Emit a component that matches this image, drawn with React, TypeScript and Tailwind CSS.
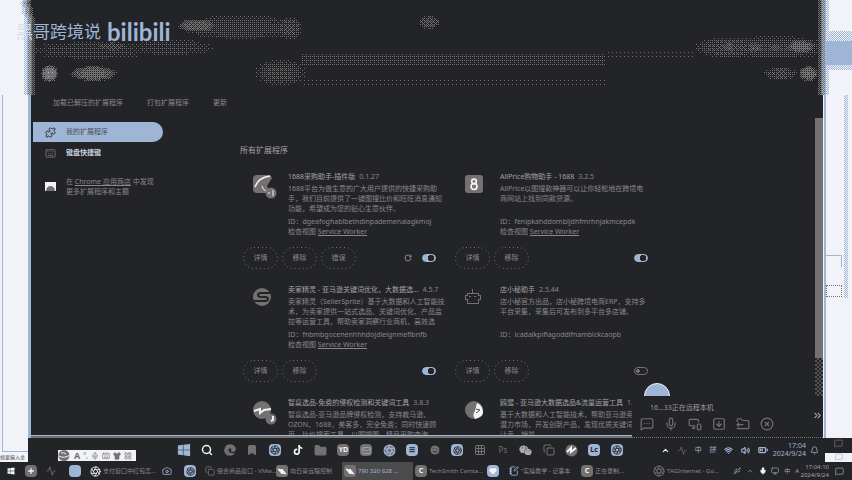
import { useMemo, useState } from "react";
import type { ReactNode } from "react";
import {
  Search, Mail, Folder, Camera, RotateCw, Mic, MessageSquare, MessageSquareMore, FolderOutput, CircleX, Wifi, Volume2,
  BatteryMedium, ChevronUp, ChevronsRight, Keyboard, Puzzle, MonitorSmartphone, Shirt, LayoutGrid, Bookmark,
  SquareArrowDown, Usb, Monitor, Heart, NotebookPen, Activity, Plus, Aperture, Copy, Grid3x3, Smile, Bell,
} from "lucide-react";
import { FaWindows, FaTiktok, FaWeixin, FaEdge } from "react-icons/fa";

/* ---------- dithered haze along the top of the screen ---------- */

const BAYER = [0, 8, 2, 10, 12, 4, 14, 6, 3, 11, 1, 9, 15, 7, 13, 5];
const LEVELS = ["#232427", "#767171", "#9eb5d6", "#f1f3f8"];
// centre x, centre y, radius x, radius y, strength
const BLOBS = [
  [197, 25, 20, 7, 0.65], [240, 27, 62, 13, 0.26], [90, 50, 62, 10, 0.2], [112, 46, 16, 5, 0.4],
  [170, 47, 46, 9, 0.2], [49, 73, 9, 9, 1.05], [93, 73, 24, 8, 0.75], [289, 28, 14, 12, 0.35],
  [280, 72, 26, 14, 0.3], [429, 22, 11, 7, 0.45], [730, 47, 38, 11, 0.35], [775, 47, 60, 12, 0.3],
  [800, 46, 16, 7, 0.75], [728, 46, 8, 6, 0.55], [754, 47, 8, 6, 0.55], [775, 47, 7, 5, 0.5],
  [780, 73, 18, 7, 0.35], [808, 73, 10, 8, 0.8],
];

function hazeLevel(x: number, y: number) {
  let v = 0;
  for (const [cx, cy, rx, ry, s] of BLOBS) {
    const d = ((x - cx) / rx) ** 2 + ((y - cy) / ry) ** 2;
    if (d < 1) v = Math.max(v, s * (1 - d * d));
  }
  if (x > 300 && x < 605 && y > 53 && y < 66) v = Math.max(v, 0.16);
  if (x > 300 && x < 605 && y > 76 && y < 85) v = Math.max(v, 0.06);
  if (x > 605 && x < 695 && y > 49 && y < 58) v = Math.max(v, 0.06);
  const edge = 27 + (y > 16 ? 1 : (y - 16) / 6);
  const left = Math.max(0, Math.min(3, (edge + 7 - x) / 4));
  let right = Math.max(0, Math.min(3, (x - 817) / 4));
  if (y > 30 && y < 70) right = Math.min(right, y > 40 && y < 65 ? 2 : 2.5);
  return Math.max(v, left, right);
}

function Haze() {
  const paths = useMemo(() => {
    const out = ["", "", "", ""];
    for (let y = 0; y < 95; y++) {
      let start = 0;
      let current = -1;
      for (let x = 0; x <= 852; x++) {
        let level = -1;
        if (x < 852) {
          const v = hazeLevel(x, y);
          const base = Math.floor(v);
          const t = (BAYER[(y % 4) * 4 + (x % 4)] + 0.5) / 16;
          level = Math.min(3, base + (v - base > t ? 1 : 0));
        }
        if (level !== current) {
          if (current >= 0) out[current] += `M${start} ${y}h${x - start}v1h${start - x}z`;
          start = x;
          current = level;
        }
      }
    }
    return out;
  }, []);
  return (
    <svg className="absolute inset-x-0 top-0 h-[95px] w-full" viewBox="0 0 852 95" preserveAspectRatio="none" shapeRendering="crispEdges" aria-hidden="true">
      {paths.map((d, i) => <path key={i} d={d} fill={LEVELS[i]} />)}
    </svg>
  );
}

/* ---------- extension logos ---------- */

const logoClass = "h-6 w-6";
const logos: Record<string, ReactNode> = {
  caigou: (
    <svg className={logoClass} viewBox="0 0 24 24">
      <path d="M4 0h12q2 0 3 3l-5 8 4 7H4q-4 0-4-4V4q0-4 4-4z" fill="#767171" />
      <path d="M17 1C9 2 4 6 2 12" fill="none" stroke="#f1f3f8" strokeWidth="1.5" />
      <path d="M9 11q0 3 4 5" fill="none" stroke="#f1f3f8" strokeWidth="1" />
      <circle cx="18" cy="18" r="5.5" fill="#767171" />
      <path d="M20 15v4M15 18h2M19 20h2" stroke="#f1f3f8" fill="none" />
    </svg>
  ),
  aliprice: (
    <svg className={logoClass} viewBox="0 0 24 24">
      <rect width="18" height="18" rx="3" fill="#767171" />
      <circle cx="9" cy="6.5" r="2.3" fill="none" stroke="#f1f3f8" strokeWidth="1.7" />
      <circle cx="9" cy="11.5" r="3" fill="none" stroke="#f1f3f8" strokeWidth="1.7" />
    </svg>
  ),
  sprite: (
    <svg className={logoClass} viewBox="0 0 24 24">
      <circle cx="9" cy="9" r="9" fill="#767171" />
      <path d="M18 5H8q-3 0-3 2t3 2h4q3 0 3 2t-3 2H1" fill="none" stroke="#232427" strokeWidth="2" />
    </svg>
  ),
  dianxiaomi: (
    <svg className={logoClass} viewBox="0 0 24 24" shapeRendering="crispEdges">
      <path d="M7 1v4M2 5h11v2h2v4h-2v4H2v-4H0V7h2zM4 8h2M9 8h2" fill="none" stroke="#767171" strokeWidth="1" />
    </svg>
  ),
  zhiying: (
    <svg className={logoClass} viewBox="0 0 24 24">
      <circle cx="9" cy="9" r="9" fill="#767171" />
      <circle cx="18" cy="18" r="5.5" fill="#767171" />
      <path d="M1 10l6-2 0 4 4-3 7-1M20 15v4l-2 1" fill="none" stroke="#f1f3f8" strokeWidth="2" />
    </svg>
  ),
  oulu: (
    <svg className={logoClass} viewBox="0 0 24 24">
      <circle cx="9" cy="9" r="9" fill="#767171" />
      <path d="M12 2q5 2 6 8t-8 8q-3-4 0-8z" fill="#f1f3f8" />
      <path d="M11 8l4 1-4 3" fill="none" stroke="#4c4d55" />
    </svg>
  ),
};

/* ---------- extension cards ---------- */

type Extension = {
  logo: string;
  name: string;
  version: string;
  lines: string[];
  id: string;
  worker?: boolean;
  error?: boolean;
  on: boolean;
};

const extensions: Extension[] = [
  {
    logo: "caigou", name: "1688采购助手-插件版", version: "0.1.27",
    lines: ["1688平台为做生意的广大用户提供的快捷采购助", "手，我们目前提供了一键图搜比价和旺旺消息通知", "功能，希望成为您的贴心生意伙伴。"],
    id: "dgeafoghablbetndinpademenaiagkmoj", worker: true, error: true, on: true,
  },
  {
    logo: "aliprice", name: "AliPrice购物助手 - 1688", version: "3.2.5",
    lines: ["AliPrice以图搜款神器可以让你轻松地在跨境电", "商网站上找到同款货源。"],
    id: "fenipkahddombljdhfmrhnjakmcepdk", worker: true, on: true,
  },
  {
    logo: "sprite", name: "卖家精灵 - 亚马逊关键词优化，大数据选...", version: "4.5.7",
    lines: ["卖家精灵（SellerSprite）基于大数据和人工智能技", "术，为卖家提供一站式选品、关键词优化、产品监", "控等运营工具，帮助卖家洞察行业商机，高效选"],
    id: "fnbmbgocenenhhhdojdielgnmeflbnfb", worker: true, on: true,
  },
  {
    logo: "dianxiaomi", name: "店小秘助手", version: "2.5.44",
    lines: ["店小秘官方出品，店小秘跨境电商ERP，支持多", "平台采集，采集后可发布到多平台多店铺。"],
    id: "icadaikpiflagoddlfnamblckcaopb", on: false,
  },
  {
    logo: "zhiying", name: "智赢选品-免费的侵权检测和关键词工具", version: "3.8.3",
    lines: ["智赢选品-亚马逊品牌侵权检测，支持敦马逊、", "OZON，1688，美客多，完全免费；同时快速顾", "页，比价搜索工具，以图搜图，精品采购查询。"],
    id: "jkfnbmbgocenenhhhdojdielgnmefl", worker: true, on: true,
  },
  {
    logo: "oulu", name: "鸥鹭 - 亚马逊大数据选品&流量运营工具", version: "1.9.7",
    lines: ["基于大数据和人工智能技术，帮助亚马逊卖家", "潜力市场，开发创新产品，发现优质关键词，", "让卖、销量。"],
    id: "mbgocenenhhhdojdielgnmeflbnfbk", worker: true, on: true,
  },
];

function PillButton({ children }: { children: ReactNode }) {
  return (
    <button className="relative h-[22px] w-[35px] text-[7px]">
      <svg className="absolute inset-0 h-full w-full" viewBox="0 0 35 22" fill="none" aria-hidden="true">
        <rect x="0.5" y="0.5" width="34" height="21" rx="10.5" stroke="#767171" strokeDasharray="1 3" />
      </svg>
      {children}
    </button>
  );
}

function Toggle({ label, initial }: { label: string; initial: boolean }) {
  const [on, setOn] = useState(initial);
  return (
    <input
      type="checkbox"
      aria-label={label}
      checked={on}
      onChange={() => setOn(!on)}
      className="h-2 w-3.5 shrink-0 appearance-none rounded-full border border-[#767171] bg-[radial-gradient(circle_at_3px_3px,#767171_2px,#232427_2px)] checked:border-[#9eb5d6] checked:bg-[radial-gradient(circle_at_8px_3px,#232427_3px,#9eb5d6_3px)]"
    />
  );
}

function Card({ ext }: { ext: Extension }) {
  return (
    <article className="w-[196px]">
      <div className="flex">
        <div className="w-12 shrink-0 pt-[3px] pl-[13px]">{logos[ext.logo]}</div>
        <div className="whitespace-nowrap">
          <h3 className="flex gap-1 text-[#a3a3a8]">
            {ext.name} <span className="text-[#8b8787]">{ext.version}</span>
          </h3>
          <p className="mt-0.5 h-[30px]">
            {ext.lines.map((line) => <span key={line} className="block">{line}</span>)}
          </p>
          <p className="mt-[3px]">ID：{ext.id}</p>
          <p className="h-2.5">
            {ext.worker && <>检查视图 <a href="#worker" className="underline">Service Worker</a></>}
          </p>
        </div>
      </div>
      <div className="mt-2.5 flex items-center gap-1 pl-[3px]">
        <PillButton>详情</PillButton>
        <PillButton>移除</PillButton>
        {ext.error && <PillButton>错误</PillButton>}
        <span className="flex-1" />
        {ext.error && <button aria-label="重新加载" className="mr-1.5"><RotateCw size={8} strokeWidth={3} /></button>}
        <Toggle label={ext.name} initial={ext.on} />
      </div>
    </article>
  );
}

/* ---------- browser window ---------- */

function Sidebar() {
  return (
    <nav className="w-[209px] shrink-0 pt-3 pl-0.5">
      <a href="#mine" className="flex h-5 w-[130px] items-center gap-2.5 rounded-r-full bg-[#9eb5d6] pl-3 text-[#4c4d55]">
        <Puzzle size={11} color="#232427" /> 我的扩展程序
      </a>
      <a href="#keys" className="flex h-[22px] items-center gap-2.5 pl-3 font-bold text-[#c5cedd]">
        <Keyboard size={11} color="#767171" /> 键盘快捷键
      </a>
      <div className="mt-[13px] flex items-center gap-2.5 pl-3">
        <svg width="11" height="11" viewBox="0 0 11 11">
          <rect width="11" height="9" fill="#f1f3f8" />
          <path d="M1 9a4.500 5 0 0 1 9 0z" fill="#767171" />
        </svg>
        <p>在 <a href="#store" className="underline">Chrome 应用商店</a> 中发现<br />更多扩展程序和主题</p>
      </div>
    </nav>
  );
}

function RemotePanel() {
  return (
    <section className="absolute right-0 bottom-0 flex h-[42px] w-[191px] flex-col justify-between border-b border-dotted border-[#767171] bg-[#232427] pt-[7px] pb-1.5">
      <svg className="absolute bottom-full left-3 h-[13px] w-[26px]" viewBox="0 0 26 13">
        <path d="M0.500 13a12.500 12.500 0 0 1 25 0" fill="#9eb5d6" stroke="#f1f3f8" strokeWidth="1" />
      </svg>
      <p className="pl-[18px] text-[#9c9a9d]">16...33正在远程本机</p>
      <div className="flex items-center gap-2.5 pl-2 text-[#767171]">
        <button aria-label="聊天"><MessageSquareMore size={14} /></button>
        <button aria-label="语音"><Mic size={14} /></button>
        <button aria-label="屏幕"><MonitorSmartphone size={14} /></button>
        <button aria-label="下载"><SquareArrowDown size={14} /></button>
        <button aria-label="文件"><FolderOutput size={14} /></button>
        <button aria-label="断开"><CircleX size={14} /></button>
      </div>
      <button aria-label="收起" className="absolute top-3.5 right-0 text-[#f1f3f8]"><ChevronsRight size={11} /></button>
    </section>
  );
}

function BrowserWindow() {
  return (
    <section className="relative flex min-w-0 flex-1 flex-col overflow-hidden border-l-[3px] border-[#9eb5d6] bg-[#232427]">
      <div className="h-[95px] shrink-0" />
      <div className="flex h-[15px] shrink-0 items-center gap-6 pl-[22px]">
        <button>加载已解压的扩展程序</button>
        <button>打包扩展程序</button>
        <button>更新</button>
      </div>
      <div className="flex min-h-0 flex-1">
        <Sidebar />
        <main className="min-w-0 flex-1 overflow-hidden pt-[34px]">
          <h2 className="text-[8px] leading-3 text-[#a3a3a8]">所有扩展程序</h2>
          <div className="mt-4 flex max-w-[440px] flex-wrap gap-4">
            {extensions.map((ext) => <Card key={ext.name} ext={ext} />)}
          </div>
        </main>
        <div className="flex w-2 flex-col pt-2">
          <div className="h-60 bg-[#767171]" />
          <div className="flex-1 bg-[repeating-conic-gradient(#767171_0_25%,#232427_0_50%)] bg-[size:4px_4px] opacity-60" />
        </div>
      </div>
      <div className="h-[3px] shrink-0 border-t border-[#9eb5d6] bg-[#767171]" />
      <RemotePanel />
    </section>
  );
}

function RightDesktop() {
  return (
    <aside className="flex w-[29px] shrink-0 border-l border-[#f1f3f8] bg-[#f1f3f8] pt-[95px]">
      <div className="w-0.5 bg-[#9eb5d6]" />
      <div className="w-4 pt-40">
        <div className="h-3 border-t border-r border-[#9eb5d6]" />
        <div className="mt-[18px] h-3 border border-dotted border-[#767171]" />
      </div>
      <div className="ml-0.5 h-[203px] w-1 bg-[repeating-conic-gradient(#9eb5d6_0_25%,#f1f3f8_0_50%)] bg-[size:2px_2px]" />
    </aside>
  );
}

/* ---------- taskbars ---------- */

function Chip({ children, tone = "gray" }: { children?: ReactNode; tone?: "gray" | "blue" }) {
  const colors = tone === "blue" ? "bg-[#9eb5d6] text-[#232427]" : "bg-[#767171] text-[#f1f3f8]";
  return <span className={`flex h-3 w-3 items-center justify-center rounded-sm text-[7px] font-bold ${colors}`}>{children}</span>;
}

function SunflowerMark() {
  return (
    <svg width="12" height="12" viewBox="0 0 12 12">
      <rect width="12" height="12" rx="3" fill="#767171" />
      <path d="M2 4l4 1 0-1 4 5-4-1 0 1z" fill="#f1f3f8" stroke="#f1f3f8" />
    </svg>
  );
}

const dockApps: [string, ReactNode][] = [
  ["开始", <FaWindows size={14} color="#9eb5d6" />],
  ["搜索", <Search size={12} strokeWidth={3} color="#f1f3f8" />],
  ["Edge", <FaEdge size={12} color="#767171" />],
  ["收藏", <Bookmark size={12} color="#767171" fill="#767171" />],
  ["图片", <Chip tone="blue"><Aperture size={10} /></Chip>],
  ["抖音", <FaTiktok size={10} color="#f1f3f8" />],
  ["文件夹", <Folder size={13} color="#767171" fill="#767171" />],
  ["有道", <Chip>YD</Chip>],
  ["邮件", <Chip><Mail size={9} color="#9eb5d6" /></Chip>],
  ["浏览器", <Aperture size={13} color="#9eb5d6" fill="#767171" />],
  ["文档", <Chip tone="blue">☰</Chip>],
  ["助手", <Smile size={12} color="#232427" fill="#767171" />],
  ["远程", <Chip tone="blue"><Aperture size={9} /></Chip>],
  ["表格", <Grid3x3 size={12} color="#767171" />],
  ["Ps", <span className="text-[8px] text-[#767171]">Ps</span>],
  ["微信", <FaWeixin size={13} color="#b0acae" />],
  ["虚拟机", <Copy size={12} color="#767171" />],
  ["向日葵", <svg width="13" height="13" viewBox="0 0 13 13"><circle cx="6.500" cy="6.500" r="6" fill="#767171" /><path d="M2 8l4-4v4l5-4" fill="none" stroke="#f1f3f8" strokeWidth="2" /></svg>],
  ["Lc", <Chip tone="blue">Lc</Chip>],
  ["录制", <Chip tone="blue"><Aperture size={10} /></Chip>],
];

function RemoteTaskbar() {
  return (
    <div className="flex h-6 shrink-0 bg-[#232427]">
      <div className="flex w-[148px] shrink-0 items-end pb-px pl-[30px]">
        <div className="flex h-[11px] w-[78px] items-center justify-between bg-[#f1f3f8] pr-1 text-[#767171]">
          <svg width="13" height="11" viewBox="0 0 13 11"><circle cx="6" cy="5.500" r="5.500" fill="#767171" /><path d="M1 6q5 3 11-1M3 3q3-1 5 1" fill="none" stroke="#f1f3f8" /></svg>
          <span className="text-[9px] font-bold">A</span>
          <span>°,</span>
          <Mic size={8} />
          <Keyboard size={8} />
          <Shirt size={8} fill="#767171" />
          <LayoutGrid size={8} />
        </div>
      </div>
      <div className="flex min-w-0 flex-1 items-center justify-between pr-0.5">
        {dockApps.map(([name, icon]) => (
          <button key={name} aria-label={name} className="flex h-4 w-4 items-center justify-center">{icon}</button>
        ))}
      </div>
      <div className="flex w-[198px] shrink-0 items-center pl-[34px] text-[#9eb5d6]">
        <span className="flex w-[107px] items-center justify-between">
          <ChevronUp size={9} strokeWidth={3} color="#f1f3f8" />
          <Activity size={9} color="#767171" />
          <span>中</span>
          <span>拼</span>
          <Wifi size={9} strokeWidth={3} />
          <Volume2 size={9} strokeWidth={3} />
          <BatteryMedium size={10} strokeWidth={3} />
        </span>
        <time className="w-[38px] text-right leading-2">17:04<br />2024/9/24</time>
        <Bell size={9} className="ml-1" />
      </div>
      <div className="flex w-[27px] shrink-0 flex-col items-center justify-between pt-px">
        <MessageSquare size={9} color="#767171" />
        <span className="flex h-[9px] w-full justify-center bg-[#f1f3f8]"><MessageSquare size={8} color="#9eb5d6" /></span>
      </div>
    </div>
  );
}

type Task = { width: string; icon: ReactNode; label?: string; active?: boolean };

const tasks: Task[] = [
  { width: "w-[18px]", icon: <FaWindows size={8} color="#f1f3f8" /> },
  { width: "w-[21px]", icon: <Chip><Plus size={8} strokeWidth={4} /></Chip> },
  { width: "w-[23px]", icon: <Activity size={10} color="#767171" /> },
  { width: "w-[21px]", icon: <Chip tone="blue" /> },
  { width: "w-[72px]", icon: <Aperture size={11} color="#f1f3f8" />, label: "支付窗口中红包怎..." },
  { width: "w-[22px]", icon: <Camera size={10} color="#9eb5d6" /> },
  { width: "w-[21px]", icon: <Chip tone="blue"><Aperture size={9} /></Chip> },
  { width: "w-[71px]", icon: <Copy size={10} color="#767171" />, label: "组合商品窗口 - VMw..." },
  { width: "w-[68px]", icon: <SunflowerMark />, label: "向日葵远程控制" },
  { width: "w-[71px]", icon: <SunflowerMark />, label: "790 320 628 ...", active: true },
  { width: "w-[72px]", icon: <Chip>C</Chip>, label: "TechSmith Camta..." },
  { width: "w-[22px]", icon: <Chip tone="blue"><Heart size={8} fill="#f1f3f8" color="#f1f3f8" /></Chip> },
  { width: "w-[72px]", icon: <NotebookPen size={10} color="#9eb5d6" />, label: "“实操教学 - 记事本" },
  { width: "w-[72px]", icon: <Chip>C</Chip>, label: "正在录制..." },
  { width: "w-[72px]", icon: <Aperture size={12} color="#767171" />, label: "TAGInternet - Go..." },
];

function HostTaskbar() {
  return (
    <div className="flex h-[18px] shrink-0 items-center bg-[#232427] text-[6px] whitespace-nowrap">
      <div className="flex h-full min-w-0 flex-1 items-center pl-[5px]">
        {tasks.map((task, i) => (
          <button
            key={i}
            aria-label={task.label ?? `应用 ${i + 1}`}
            className={`flex h-full shrink-0 items-center gap-0.5 pl-0.5 ${task.width} ${task.active ? "bg-[#4c4b4c] text-[#9eb5d6]" : ""}`}
          >
            <span className="shrink-0">{task.icon}</span>
            {task.label}
          </button>
        ))}
      </div>
      <div className="flex w-[119px] shrink-0 items-center text-[#a3a3a8]">
        <span className="flex w-[66px] shrink-0 items-center justify-between">
          <Usb size={8} /><ChevronUp size={8} /><Mic size={8} fill="#f1f3f8" color="#f1f3f8" /><Monitor size={8} /><span>中</span><span>A</span>
        </span>
        <time className="w-[30px] shrink-0 text-right leading-2">17:04:10<br />2024/9/24</time>
        <MessageSquare size={9} className="ml-1.5" />
      </div>
    </div>
  );
}

export default function App() {
  return (
    <div className="relative flex h-screen flex-col overflow-hidden bg-[#232427] font-['Noto_Sans','Noto_Sans_CJK_SC',sans-serif] text-[7px] leading-[10px] text-[#8b8787]">
      <div className="flex min-h-0 flex-1">
        <aside className="flex w-7 shrink-0 flex-col bg-[#f1f3f8] pt-[95px]">
          <div className="ml-0.5 flex-1 border-b border-l border-[#9eb5d6]" />
          <p className="h-2.5 text-[5px] whitespace-nowrap text-[#4c4d55]">想要输入金</p>
        </aside>
        <div className="flex min-w-0 flex-1 flex-col">
          <div className="flex min-h-0 flex-1">
            <BrowserWindow />
            <RightDesktop />
          </div>
          <RemoteTaskbar />
        </div>
      </div>
      <HostTaskbar />
      <Haze />
      <div className="absolute top-4 left-4 flex h-8 items-center gap-1.5 whitespace-nowrap text-[#9eb5d6]">
        <span className="text-[17px] leading-8"><span className="text-[#d5deec]">黑</span>哥跨境说</span>
        <span className="font-['Lato'] text-[24px] leading-7 font-bold">bilibili</span>
      </div>
    </div>
  );
}
